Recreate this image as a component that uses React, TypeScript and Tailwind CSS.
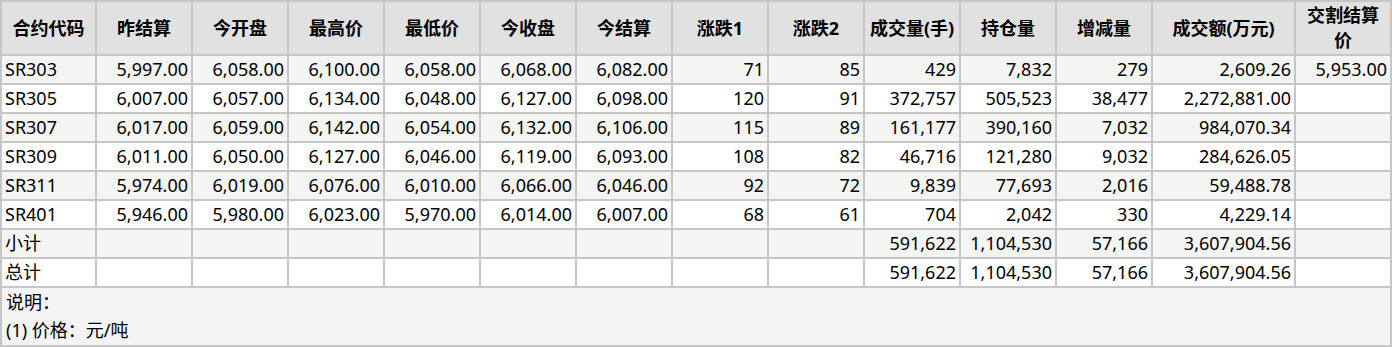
const headers = [
  "合约代码",
  "昨结算",
  "今开盘",
  "最高价",
  "最低价",
  "今收盘",
  "今结算",
  "涨跌1",
  "涨跌2",
  "成交量(手)",
  "持仓量",
  "增减量",
  "成交额(万元)",
  "交割结算价",
];

const widths = [95, 96, 96, 96, 96, 96, 96, 96, 96, 96, 96, 96, 143, 96];

const rows = [
  ["SR303", "5,997.00", "6,058.00", "6,100.00", "6,058.00", "6,068.00", "6,082.00", "71", "85", "429", "7,832", "279", "2,609.26", "5,953.00"],
  ["SR305", "6,007.00", "6,057.00", "6,134.00", "6,048.00", "6,127.00", "6,098.00", "120", "91", "372,757", "505,523", "38,477", "2,272,881.00", ""],
  ["SR307", "6,017.00", "6,059.00", "6,142.00", "6,054.00", "6,132.00", "6,106.00", "115", "89", "161,177", "390,160", "7,032", "984,070.34", ""],
  ["SR309", "6,011.00", "6,050.00", "6,127.00", "6,046.00", "6,119.00", "6,093.00", "108", "82", "46,716", "121,280", "9,032", "284,626.05", ""],
  ["SR311", "5,974.00", "6,019.00", "6,076.00", "6,010.00", "6,066.00", "6,046.00", "92", "72", "9,839", "77,693", "2,016", "59,488.78", ""],
  ["SR401", "5,946.00", "5,980.00", "6,023.00", "5,970.00", "6,014.00", "6,007.00", "68", "61", "704", "2,042", "330", "4,229.14", ""],
  ["小计", "", "", "", "", "", "", "", "", "591,622", "1,104,530", "57,166", "3,607,904.56", ""],
  ["总计", "", "", "", "", "", "", "", "", "591,622", "1,104,530", "57,166", "3,607,904.56", ""],
];

export default function App() {
  return (
    <div className="bg-white font-['Noto_Sans','Noto_Sans_CJK_SC',sans-serif] text-[18px] text-black">
      <table className="table-fixed border-collapse w-[1392px]">
        <colgroup>
          {widths.map((w, i) => (
            <col key={i} style={{ width: w }} />
          ))}
        </colgroup>
        <thead>
          <tr className="bg-[#e1e1e1]">
            {headers.map((h) => (
              <th
                key={h}
                className="border-2 border-[#c6c6c6] h-[54px] px-[4px] text-center font-bold leading-[25px]"
              >
                {h}
              </th>
            ))}
          </tr>
        </thead>
        <tbody>
          {rows.map((r, ri) => (
            <tr key={ri} className={ri % 2 === 0 ? "bg-[#f4f4f2]" : "bg-white"}>
              {r.map((c, ci) => (
                <td
                  key={ci}
                  className={
                    "border-2 border-[#c6c6c6] h-[29px] py-0 px-[3px] leading-[25px] whitespace-nowrap " +
                    (ci === 0 ? "text-left" : "text-right")
                  }
                >
                  {c}
                </td>
              ))}
            </tr>
          ))}
          <tr className="bg-[#f4f4f4]">
            <td colSpan={14} className="border-2 border-[#c6c6c6] h-[59px] px-[4px] py-0 align-top leading-[28px]">
              <div>说明：</div>
              <div>(1) 价格：元/吨</div>
            </td>
          </tr>
        </tbody>
      </table>
    </div>
  );
}
